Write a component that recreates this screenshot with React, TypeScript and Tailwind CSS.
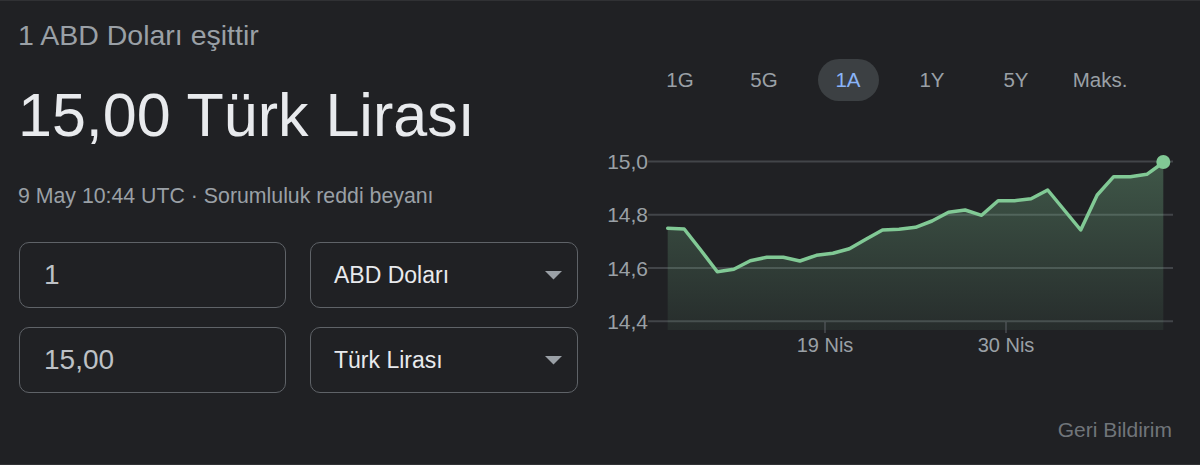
const points: [number, number][] = [
  [667.7, 228.3], [684.2, 229], [700.7, 250], [717.3, 271.7], [733.8, 269.3],
  [750.3, 260.7], [766.8, 257.3], [783.3, 257.3], [799.9, 261], [816.4, 255.3],
  [832.9, 253.3], [849.4, 248.7], [865.9, 239.3], [882.5, 230], [899, 229.3],
  [915.5, 227.3], [932, 221], [948.5, 212.3], [965.1, 210], [981.6, 215.3],
  [998.1, 200.7], [1014.6, 200.7], [1031.1, 198.7], [1047.7, 190], [1064.2, 210],
  [1080.7, 230], [1097.2, 195], [1113.7, 176.7], [1130.3, 176.7], [1146.8, 174.3],
  [1163.3, 162.5],
];

// svg sits at x=590, y=130 of the page
const OX = 590;
const OY = 130;

const grid = [
  { y: 161.5, label: "15,0" },
  { y: 214.8, label: "14,8" },
  { y: 268, label: "14,6" },
  { y: 321.3, label: "14,4" },
];

const tabs = ["1G", "5G", "1A", "1Y", "5Y", "Maks."];

function Chart() {
  const pts = points.map(([x, y]) => `${(x - OX).toFixed(1)},${(y - OY).toFixed(1)}`);
  const line = pts.join(" ");
  const first = points[0][0] - OX;
  const last = points[points.length - 1][0] - OX;
  const area = `${first},${330 - OY} ${line} ${last},${330 - OY}`;

  return (
    <svg width={600} height={240} viewBox="0 0 600 240" className="block">
      <defs>
        <linearGradient id="fill" x1="0" y1="0" x2="0" y2="1">
          <stop offset="0%" stopColor="#81c995" stopOpacity={0.32} />
          <stop offset="100%" stopColor="#81c995" stopOpacity={0.07} />
        </linearGradient>
      </defs>
      {grid.map((g) => (
        <g key={g.label}>
          <line x1={648 - OX} x2={1173 - OX} y1={g.y - OY} y2={g.y - OY} stroke="#424549" strokeWidth={2} />
          <text
            x={648 - OX}
            y={g.y - OY + 7.5}
            textAnchor="end"
            fill="#9aa0a6"
            fontSize={21}
            fontFamily="'Liberation Sans', Arial, sans-serif"
          >
            {g.label}
          </text>
        </g>
      ))}
      <polygon points={area} fill="url(#fill)" />
      {[825, 1006].map((x) => (
        <line key={x} x1={x - OX} x2={x - OX} y1={322 - OY} y2={333 - OY} stroke="#5f6368" strokeWidth={1} />
      ))}
      <text x={825 - OX} y={352 - OY} textAnchor="middle" fill="#9aa0a6" fontSize={20} fontFamily="'Liberation Sans', Arial, sans-serif">
        19 Nis
      </text>
      <text x={1006 - OX} y={352 - OY} textAnchor="middle" fill="#9aa0a6" fontSize={20} fontFamily="'Liberation Sans', Arial, sans-serif">
        30 Nis
      </text>
      <polyline points={line} fill="none" stroke="#81c995" strokeWidth={3.5} strokeLinejoin="round" strokeLinecap="round" />
      <circle cx={last} cy={162 - OY} r={7} fill="#81c995" />
    </svg>
  );
}

function Caret() {
  return (
    <svg width="17" height="9" viewBox="0 0 17 9" className="shrink-0">
      <polygon points="0,0 17,0 8.5,8.5" fill="#9aa0a6" />
    </svg>
  );
}

export default function App() {
  return (
    <div
      className="w-[1200px] h-[465px] overflow-hidden bg-[#202124] border-t border-b border-[#303134] flex"
      style={{ fontFamily: "'Liberation Sans', Arial, sans-serif" }}
    >
      {/* converter side */}
      <div className="w-[590px] shrink-0 pl-[18px] pt-[16px] flex flex-col">
        <div className="text-[28.5px] leading-[36px] text-[#9aa0a6]">1 ABD Doları eşittir</div>
        <div className="mt-[26px] text-[61px] leading-[72px] text-[#e8eaed] whitespace-nowrap">15,00 Türk Lirası</div>
        <div className="mt-[31px] text-[21.3px] leading-[28px] text-[#9aa0a6] whitespace-nowrap">
          9 May 10:44 UTC · <span>Sorumluluk reddi beyanı</span>
        </div>

        <div className="mt-[32px] ml-px grid grid-cols-[267px_268px] gap-x-[24px] gap-y-[19px]">
          <div className="h-[66px] rounded-[10px] border border-[#5f6368] flex items-center pl-[24px] text-[28px] text-[#bdc1c6]">
            1
          </div>
          <div className="h-[66px] rounded-[10px] border border-[#5f6368] flex items-center justify-between pl-[23px] pr-[15px] text-[23px] text-[#e8eaed]">
            <span>ABD Doları</span>
            <Caret />
          </div>
          <div className="h-[66px] rounded-[10px] border border-[#5f6368] flex items-center pl-[24px] text-[28px] text-[#bdc1c6]">
            15,00
          </div>
          <div className="h-[66px] rounded-[10px] border border-[#5f6368] flex items-center justify-between pl-[23px] pr-[15px] text-[23px] text-[#e8eaed]">
            <span>Türk Lirası</span>
            <Caret />
          </div>
        </div>
      </div>

      {/* chart side */}
      <div className="flex-1 flex flex-col">
        <div className="mt-[58px] ml-[48px] flex h-[42px]">
          {tabs.map((t) => (
            <div key={t} className="w-[84px] flex items-center justify-center">
              {t === "1A" ? (
                <div className="w-[61px] h-[42px] rounded-full bg-[#3c4043] flex items-center justify-center text-[20.5px] text-[#8ab4f8]">
                  {t}
                </div>
              ) : (
                <span className="text-[20.5px] text-[#9aa0a6]">{t}</span>
              )}
            </div>
          ))}
        </div>
        <div className="mt-[29px]">
          <Chart />
        </div>
        <div className="mt-[46px] pr-[28px] text-right text-[21px] leading-[28px] text-[#70757a]">Geri Bildirim</div>
      </div>
    </div>
  );
}
